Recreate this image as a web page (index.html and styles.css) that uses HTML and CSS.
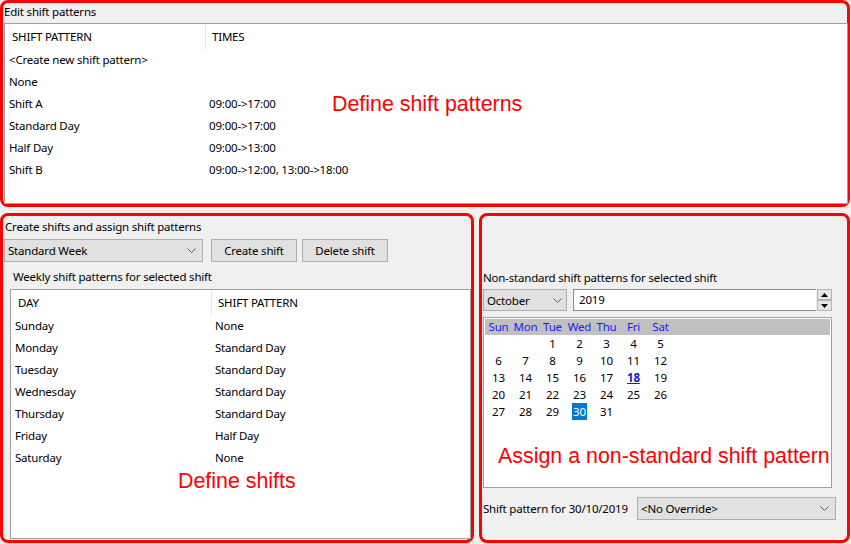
FILE: index.html
```html
<!DOCTYPE html>
<html>
<head>
<meta charset="utf-8">
<link rel="stylesheet" href="styles.css">
</head>
<body>
<div class="app">
  <section class="panel panel-top">
    <div class="caption">Edit shift patterns</div>
    <div class="list list-top">
      <div class="lv-head"><div class="c1">SHIFT PATTERN</div><div class="c2">TIMES</div></div>
      <div class="lv-row"><div class="c1">&lt;Create new shift pattern&gt;</div><div class="c2"></div></div>
      <div class="lv-row"><div class="c1">None</div><div class="c2"></div></div>
      <div class="lv-row"><div class="c1">Shift A</div><div class="c2">09:00-&gt;17:00</div></div>
      <div class="lv-row"><div class="c1">Standard Day</div><div class="c2">09:00-&gt;17:00</div></div>
      <div class="lv-row"><div class="c1">Half Day</div><div class="c2">09:00-&gt;13:00</div></div>
      <div class="lv-row"><div class="c1">Shift B</div><div class="c2">09:00-&gt;12:00, 13:00-&gt;18:00</div></div>
      <div class="note note-top">Define shift patterns</div>
    </div>
  </section>

  <div class="bottom">
    <section class="panel panel-left">
      <div class="caption cap-left">Create shifts and assign shift patterns</div>
      <div class="toolbar">
        <div class="combo combo-week"><span>Standard Week</span><svg class="chev" width="9" height="5" viewBox="0 0 9 5"><polyline points="0.5,0.5 4.5,4.5 8.5,0.5" fill="none" stroke="#606060" stroke-width="1"/></svg></div>
        <div class="btn btn-create">Create shift</div>
        <div class="btn btn-delete">Delete shift</div>
      </div>
      <div class="caption cap-weekly">Weekly shift patterns for selected shift</div>
      <div class="list list-week">
        <div class="lv-head"><div class="c1">DAY</div><div class="c2">SHIFT PATTERN</div></div>
        <div class="lv-row"><div class="c1">Sunday</div><div class="c2">None</div></div>
        <div class="lv-row"><div class="c1">Monday</div><div class="c2">Standard Day</div></div>
        <div class="lv-row"><div class="c1">Tuesday</div><div class="c2">Standard Day</div></div>
        <div class="lv-row"><div class="c1">Wednesday</div><div class="c2">Standard Day</div></div>
        <div class="lv-row"><div class="c1">Thursday</div><div class="c2">Standard Day</div></div>
        <div class="lv-row"><div class="c1">Friday</div><div class="c2">Half Day</div></div>
        <div class="lv-row"><div class="c1">Saturday</div><div class="c2">None</div></div>
        <div class="note note-left">Define shifts</div>
      </div>
    </section>

    <section class="panel panel-right">
      <div class="caption cap-ns">Non-standard shift patterns for selected shift</div>
      <div class="monthrow">
        <div class="combo combo-month"><span>October</span><svg class="chev" width="9" height="5" viewBox="0 0 9 5"><polyline points="0.5,0.5 4.5,4.5 8.5,0.5" fill="none" stroke="#606060" stroke-width="1"/></svg></div>
        <div class="yearbox">2019</div>
        <div class="spin">
          <div class="spin-btn"><svg width="7" height="4" viewBox="0 0 7 4"><polygon points="0,4 3.5,0 7,4" fill="#000"/></svg></div>
          <div class="spin-btn"><svg width="7" height="4" viewBox="0 0 7 4"><polygon points="0,0 3.5,4 7,0" fill="#000"/></svg></div>
        </div>
      </div>
      <div class="calendar">
        <div class="cal-head">
          <span>Sun</span><span>Mon</span><span>Tue</span><span>Wed</span><span>Thu</span><span>Fri</span><span>Sat</span>
        </div>
        <div class="cal-grid">
          <span></span><span></span><span>1</span><span>2</span><span>3</span><span>4</span><span>5</span>
          <span>6</span><span>7</span><span>8</span><span>9</span><span>10</span><span>11</span><span>12</span>
          <span>13</span><span>14</span><span>15</span><span>16</span><span>17</span><span><b class="today">18</b></span><span>19</span>
          <span>20</span><span>21</span><span>22</span><span>23</span><span>24</span><span>25</span><span>26</span>
          <span>27</span><span>28</span><span>29</span><span><i class="sel">30</i></span><span>31</span>
        </div>
      </div>
      <div class="overrow">
        <div class="over-label">Shift pattern for 30/10/2019</div>
        <div class="combo combo-over"><span>&lt;No Override&gt;</span><svg class="chev" width="9" height="5" viewBox="0 0 9 5"><polyline points="0.5,0.5 4.5,4.5 8.5,0.5" fill="none" stroke="#606060" stroke-width="1"/></svg></div>
      </div>
      <div class="note note-right">Assign a non-standard shift pattern</div>
    </section>
  </div>
</div>
</body>
</html>
```

FILE: styles.css
```css
* { box-sizing: border-box; }
html, body {
  margin: 0;
  padding: 0;
  background: #f0f0f0;
}
body {
  width: 851px;
  height: 544px;
  overflow: hidden;
  font-family: "Noto Sans", "Open Sans", sans-serif;
  font-size: 11.5px;
  letter-spacing: -0.2px;
  color: #000;
}
.app {
  display: flex;
  flex-direction: column;
  gap: 6px;
  width: 850px;
}
.panel {
  border: 3px solid #ff0000;
  border-radius: 8px;
  position: relative;
  display: flex;
  flex-direction: column;
}
.panel-top {
  height: 207px;
  padding-left: 1px;
}
.caption {
  line-height: 18px;
  height: 18px;
  white-space: nowrap;
}
.panel-top .caption { margin-bottom: 2px; }

.list {
  background: #fff;
  border: 1px solid #a0a0a0;
  position: relative;
  flex: 1;
}
.list-top { margin-right: -1px; }

.lv-head {
  display: flex;
  height: 25px;
  line-height: 25px;
}
.lv-head .c1 {
  width: 201px;
  padding-left: 7px;
  border-right: 1px solid #e5e5e5;
}
.lv-head .c2 { padding-left: 6px; }
.lv-row {
  display: flex;
  height: 22px;
  line-height: 22px;
}
.lv-row .c1 {
  width: 200px;
  padding-left: 4px;
}
.lv-row .c2 { padding-left: 4px; }

.note {
  position: absolute;
  color: #ff0000;
  font-family: "Liberation Sans", "Noto Sans", sans-serif;
  font-size: 21.4px;
  letter-spacing: 0;
  line-height: 24px;
  white-space: nowrap;
}
.note-top { left: 327px; top: 68px; }
.note-left { left: 167px; top: 179px; }
.note-right { left: 16px; top: 228px; }

.bottom {
  display: flex;
  gap: 5px;
  height: 330px;
}
.panel-left {
  width: 474px;
  padding: 0 0 1px 1px;
}
.cap-left {
  margin-top: 2px;
  padding-left: 1px;
}
.toolbar {
  display: flex;
  margin-top: 3px;
  height: 23px;
}
.combo {
  background: #e1e1e1;
  border: 1px solid #adadad;
  display: flex;
  align-items: center;
  justify-content: space-between;
  padding: 0 6px 0 3px;
  white-space: nowrap;
}
.chev { flex: none; }
.combo-week { width: 199px; }
.btn {
  background: #e1e1e1;
  border: 1px solid #adadad;
  width: 86px;
  display: flex;
  align-items: center;
  justify-content: center;
  white-space: nowrap;
}
.btn-create { margin-left: 8px; }
.btn-delete { margin-left: 5px; }
.cap-weekly {
  margin-top: 6px;
  padding-left: 9px;
}
.list-week {
  margin: 3px 0 0 6px;
}

.panel-right {
  width: 371px;
  padding-left: 1px;
}
.cap-ns { margin-top: 53px; }
.monthrow {
  display: flex;
  margin-top: 2px;
  height: 22px;
}
.combo-month { width: 84px; padding-right: 4px; }
.yearbox {
  margin-left: 6px;
  width: 243px;
  background: #fff;
  border: 1px solid #8c8c8c;
  border-right: none;
  padding-left: 5px;
  line-height: 19px;
}
.spin {
  display: flex;
  flex-direction: column;
  margin-left: 1px;
  width: 15px;
}
.spin-btn {
  flex: 1;
  background: #e6e6e6;
  border: 1px solid #b5b5b5;
  display: flex;
  align-items: center;
  justify-content: center;
}

.calendar {
  margin-top: 6px;
  width: 349px;
  height: 171px;
  background: #fff;
  border: 1px solid #a0a0a0;
  padding: 1px;
}
.cal-head {
  background: #c0c0c0;
  height: 16px;
  display: grid;
  grid-template-columns: repeat(7, 27px);
  color: #1a1aff;
  line-height: 16px;
}
.cal-head span, .cal-grid span { text-align: center; }
.cal-grid {
  display: grid;
  grid-template-columns: repeat(7, 27px);
  grid-auto-rows: 17px;
  line-height: 18px;
}
.today {
  color: #1515d6;
  text-decoration: underline;
  font-weight: bold;
}
.sel {
  font-style: normal;
  display: inline-block;
  background: #0078d7;
  color: #fff;
  padding: 0 1px;
  line-height: 17px;
}
.overrow {
  display: flex;
  align-items: center;
  margin-top: 9px;
  height: 23px;
}
.over-label { width: 154px; white-space: nowrap; }
.combo-over { width: 199px; height: 23px; padding-right: 6px; }
```
